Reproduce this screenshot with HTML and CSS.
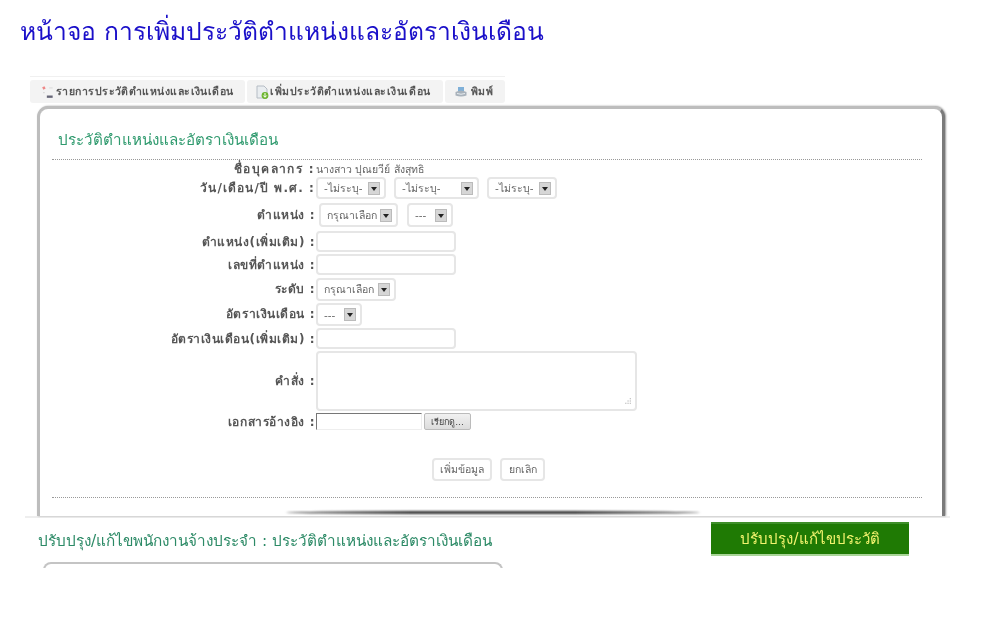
FILE: index.html
```html
<!DOCTYPE html>
<html lang="th">
<head>
<meta charset="utf-8">
<title>หน้าจอ การเพิ่มประวัติตำแหน่งและอัตราเงินเดือน</title>
<link rel="stylesheet" href="styles.css">
</head>
<body>
<h1 class="title">หน้าจอ การเพิ่มประวัติตำแหน่งและอัตราเงินเดือน</h1>
<nav class="tabs">
  <a class="tab tab-list"><svg class="icon" viewBox="0 0 12 12"><path d="M1 2l2-1 1 2-2 1z" fill="#e88"/><path d="M2 6h1v1H2z" fill="#ccc"/><path d="M5 9h5v2H5z" fill="#667"/><path d="M7 2h3v1H7z" fill="#ddd"/></svg>รายการประวัติตำแหน่งและเงินเดือน</a>
  <a class="tab tab-add"><svg class="icon" viewBox="0 0 14 14"><path d="M2 1h7l3 3v9H2z" fill="#e9edf0" stroke="#b5bcc4"/><circle cx="10" cy="10.500" r="3.400" fill="#6cb52d"/><path d="M10 8v4M8.300 10.500L10 12.300l1.700-1.800" stroke="#fff" fill="none"/></svg>เพิ่มประวัติตำแหน่งและเงินเดือน</a>
  <a class="tab tab-print"><svg class="icon" viewBox="0 0 14 14"><path d="M4 2h6v4H4z" fill="#7fb0d8"/><path d="M1.500 7q5.500-3 11 0v3.500q-5.500 2-11 0z" fill="#a9b2bb"/><path d="M3 8.500q4 1.500 8 0" stroke="#e8edf1" fill="none"/></svg>พิมพ์</a>
</nav>
<main class="card">
  <h2 class="card-title">ประวัติตำแหน่งและอัตราเงินเดือน</h2>
  <form class="form">
    <div class="label label-name">ชื่อบุคลากร :</div>
    <div class="value value-name">นางสาว ปุณยวีย์ สังสุทธิ</div>

    <div class="label label-date">วัน/เดือน/ปี พ.ศ. :</div>
    <div class="value">
      <span class="select w-day">-ไม่ระบุ-<i class="arrow"></i></span>
      <span class="select w-month">-ไม่ระบุ-<i class="arrow"></i></span>
      <span class="select w-day">-ไม่ระบุ-<i class="arrow"></i></span>
    </div>

    <div class="label label-tall">ตำแหน่ง :</div>
    <div class="value indent">
      <span class="select taller w-choose">กรุณาเลือก<i class="arrow"></i></span>
      <span class="select taller w-dash">---<i class="arrow"></i></span>
    </div>

    <div class="label">ตำแหน่ง(เพิ่มเติม) :</div>
    <div class="value"><span class="input"></span></div>

    <div class="label">เลขที่ตำแหน่ง :</div>
    <div class="value"><span class="input"></span></div>

    <div class="label">ระดับ :</div>
    <div class="value"><span class="select tall w-level">กรุณาเลือก<i class="arrow"></i></span></div>

    <div class="label">อัตราเงินเดือน :</div>
    <div class="value"><span class="select tall w-dash">---<i class="arrow"></i></span></div>

    <div class="label">อัตราเงินเดือน(เพิ่มเติม) :</div>
    <div class="value"><span class="input"></span></div>

    <div class="label label-center">คำสั่ง :</div>
    <div class="value"><span class="textarea"><svg class="grip" viewBox="0 0 8 8"><path d="M6 1h1v1H6zM4 3h1v1H4zM6 3h1v1H6zM2 5h1v1H2zM4 5h1v1H4zM6 5h1v1H6z" fill="#aaa"/></svg></span></div>

    <div class="label label-file">เอกสารอ้างอิง :</div>
    <div class="value file"><span class="file-box"></span><span class="file-btn">เรียกดู...</span></div>

    <div class="actions">
      <span class="btn">เพิ่มข้อมูล</span>
      <span class="btn">ยกเลิก</span>
    </div>
  </form>
  <div class="rule"></div>
  <div class="bar-shadow"></div>
</main>
<footer class="band">
  <div class="band-row">
    <p class="band-text">ปรับปรุง/แก้ไขพนักงานจ้างประจำ : ประวัติตำแหน่งและอัตราเงินเดือน</p>
    <span class="band-btn">ปรับปรุง/แก้ไขประวัติ</span>
  </div>
  <div class="card-next"></div>
</footer>
</body>
</html>
```
FILE: styles.css
```css
* { box-sizing: border-box; }
html, body { margin: 0; height: 628px; overflow: hidden; background: #fff; }
body { font-family: "DejaVu Sans", "Noto Sans", sans-serif; color: #444; padding-top: 16px; }

.title {
  margin: 0 0 0 20px;
  height: 60px;
  font-weight: 400;
  font-size: 24.6px;
  line-height: 32px;
  color: #1a0fc9;
  filter: blur(.3px);
}

.tabs {
  display: flex;
  gap: 2px;
  height: 27px;
  margin-left: 30px;
  width: 475px;
  padding-top: 3px;
  border-top: 1px solid #f0f0f0;
  filter: blur(.35px);
}
.tab {
  display: flex;
  align-items: center;
  gap: 1px;
  padding-left: 11px;
  background: #f3f3f3;
  border-radius: 3px;
  font-size: 10.5px;
  letter-spacing: .45px;
  font-weight: 700;
  color: #555;
  white-space: nowrap;
}
.tab-list { width: 215px; }
.tab-add { width: 196px; padding-left: 8px; letter-spacing: .55px; }
.tab-print { width: 60px; padding-left: 9px; gap: 3px; }
.icon { width: 14px; height: 14px; flex: none; }

.card {
  width: 908px;
  height: 410px;
  margin: 3px 0 0 37px;
  padding: 0 20px 0 12px;
  background: #fff;
  border: solid #bdbdbd;
  border-width: 3px 3px 0 3px;
  border-right-color: #7a7a7a;
  border-radius: 11px 11px 0 0;
  box-shadow: 1px 0 2px #999;
  overflow: hidden;
  filter: blur(.3px);
}
.card-title {
  margin: 19px 0 0;
  height: 32px;
  padding-left: 6px;
  font-weight: 400;
  font-size: 15.2px;
  line-height: 24px;
  color: #2f9a6e;
  border-bottom: 1px dotted #999;
}

.form {
  display: grid;
  grid-template-columns: 264px 1fr;
  grid-template-rows: 15px 26px 28px 23px 24px 25px 25px 23px 62px 45px 26px;
  margin-top: 2px;
  font-size: 10px;
}
.label {
  text-align: right;
  font-weight: 700;
  color: #555;
  line-height: 22px;
  font-size: 12px;
  letter-spacing: .55px;
  padding-right: 1px;
  white-space: nowrap;
}
.label-name { line-height: 14px; letter-spacing: 1.400px; }
.label-date { letter-spacing: 1.100px; }
.label-tall { line-height: 24px; }
.label-center { line-height: 60px; }
.label-file { line-height: 18px; }
.value { display: flex; align-items: flex-start; color: #666; white-space: nowrap; }
.value-name { line-height: 14px; font-size: 10.5px; }
.indent { padding-left: 3px; gap: 9px; }

.select {
  display: flex;
  align-items: center;
  justify-content: space-between;
  height: 22px;
  padding: 0 4px 0 6px;
  background: #fff;
  border: 2px solid #e6e6e6;
  border-radius: 4px;
  font-size: 10.5px;
  color: #666;
  margin-right: 8px;
}
.select.tall { height: 23px; }
.select.taller { height: 24px; }
.indent .select { margin-right: 0; }
.w-day { width: 70px; }
.w-month { width: 85px; }
.w-choose { width: 79px; }
.w-level { width: 80px; }
.w-dash { width: 46px; }
.arrow {
  position: relative;
  display: block;
  flex: none;
  width: 12px;
  height: 13px;
  background: #d6d6d6;
  border: 1px solid #bbb;
}
.arrow::after {
  content: "";
  position: absolute;
  left: 2px;
  top: 4px;
  border: 3px solid transparent;
  border-top: 4px solid #222;
  border-bottom: 0;
}
.input {
  display: block;
  width: 140px;
  height: 21px;
  border: 2px solid #e6e6e6;
  border-radius: 4px;
}
.textarea {
  display: flex;
  align-items: flex-end;
  justify-content: flex-end;
  width: 321px;
  height: 60px;
  padding: 3px;
  border: 2px solid #e6e6e6;
  border-radius: 4px;
}
.grip { width: 9px; height: 9px; }
.file { gap: 2px; }
.file-box {
  display: block;
  width: 106px;
  height: 17px;
  border: solid;
  border-color: #777 #eee #eee #777;
  border-width: 1px;
}
.file-btn {
  display: flex;
  align-items: center;
  justify-content: center;
  width: 47px;
  height: 17px;
  background: linear-gradient(#f1f1f1, #dcdcdc);
  border: 1px solid #bbb;
  border-radius: 2px;
  font-size: 9px;
  color: #444;
}
.actions {
  grid-column: 1 / -1;
  display: flex;
  gap: 8px;
  padding-left: 380px;
}
.btn {
  display: flex;
  align-items: center;
  justify-content: center;
  height: 23px;
  border: 2px solid #e6e6e6;
  border-radius: 4px;
  font-size: 10.5px;
  color: #666;
}
.actions .btn:first-child { width: 60px; }
.actions .btn:last-child { width: 45px; }
.rule { height: 1px; border-top: 1px dotted #999; margin-top: 13px; }
.bar-shadow {
  width: 414px;
  height: 3px;
  margin: 13px 0 0 234px;
  border-radius: 50%;
  background: #333;
  filter: blur(1px);
}

.band {
  width: 925px;
  height: 52px;
  margin-left: 25px;
  border-top: 2px solid #eee;
  overflow: hidden;
}
.band-row { display: flex; height: 44px; padding-top: 4px; align-items: flex-start; justify-content: space-between; padding-right: 41px; }
.band-text {
  margin: 0;
  padding: 9px 0 0 13px;
  font-size: 15.3px;
  line-height: 20px;
  color: #2c8a66;
  filter: blur(.3px);
}
.band-btn {
  display: flex;
  align-items: center;
  justify-content: center;
  width: 198px;
  height: 34px;
  background: #1f7a04;
  border-top: 2px solid #3f8f2a;
  border-bottom: 2px solid #a9d598;
  font-size: 15px;
  color: #f3f36e;
  filter: blur(.3px);
}
.card-next {
  width: 460px;
  height: 10px;
  margin-left: 18px;
  border: 2px solid #c4c4c4;
  border-bottom: 0;
  border-radius: 8px 8px 0 0;
  filter: blur(.4px);
}
```
